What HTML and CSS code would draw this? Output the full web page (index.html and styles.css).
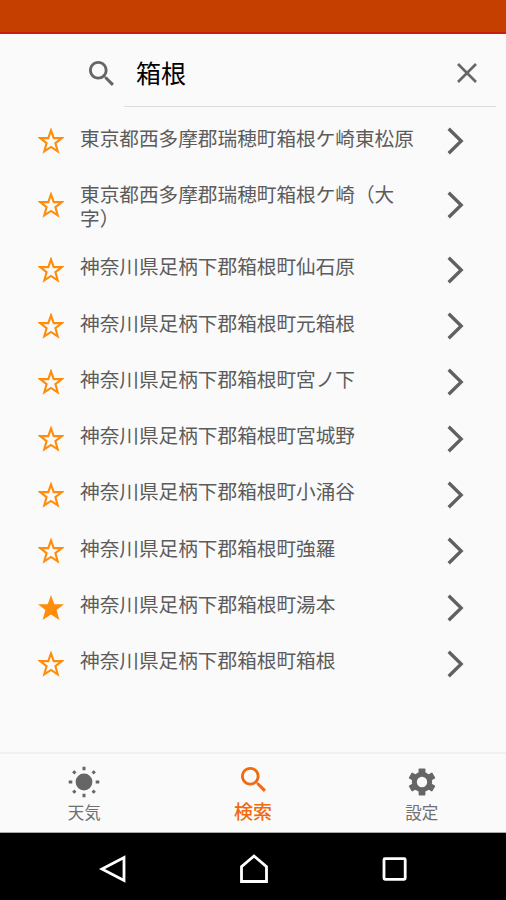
FILE: index.html
```html
<!DOCTYPE html>
<html lang="ja">
<head>
<meta charset="utf-8">
<title>箱根</title>
<link rel="stylesheet" href="styles.css">
</head>
<body>
<svg class="defs" aria-hidden="true">
  <symbol id="star" viewBox="0 0 26 26"><path d="M13 2.4l2.7 7.7h8.1l-6.4 5 2.3 8.2-6.7-4.4-6.7 4.4 2.3-8.2-6.4-5h8.1z" fill="none" stroke="currentColor" stroke-width="2.1"/></symbol>
  <symbol id="star-full" viewBox="0 0 26 26"><path d="M13 0l3.3 9.2H26l-7.4 5.8L21.4 25 13 19.6 4.6 25l2.8-10L0 9.2h9.7z"/></symbol>
  <symbol id="chevron" viewBox="0 0 20 28"><path d="M2.7 1.7L15.2 14 2.7 26.3" fill="none" stroke="currentColor" stroke-width="3.3"/></symbol>
  <symbol id="search" viewBox="3 3 17.5 17.5"><path d="M15.5 14h-.79l-.28-.27C15.41 12.59 16 11.11 16 9.5 16 5.91 13.09 3 9.5 3S3 5.91 3 9.5 5.91 16 9.5 16c1.61 0 3.09-.59 4.23-1.57l.27.28v.79l5 4.99L20.49 19l-4.99-5zm-6 0C7.01 14 5 11.99 5 9.5S7.01 5 9.5 5 14 7.01 14 9.5 11.99 14 9.5 14z"/></symbol>
</svg>
<div class="status"></div>
<header class="searchbar">
  <svg class="search-icon"><use href="#search"/></svg>
  <div class="field">
    <span class="query">箱根</span>
    <svg class="clear" viewBox="0 0 20 20"><path d="M1 1l18 18M19 1L1 19" fill="none" stroke="currentColor" stroke-width="2.6"/></svg>
  </div>
</header>
<ul class="results">
  <li class="row"><svg class="star"><use href="#star"/></svg><span class="place">東京都西多摩郡瑞穂町箱根ケ崎東松原</span><svg class="chevron"><use href="#chevron"/></svg></li>
  <li class="row tall"><svg class="star"><use href="#star"/></svg><span class="place">東京都西多摩郡瑞穂町箱根ケ崎（大<br>字）</span><svg class="chevron"><use href="#chevron"/></svg></li>
  <li class="row"><svg class="star"><use href="#star"/></svg><span class="place">神奈川県足柄下郡箱根町仙石原</span><svg class="chevron"><use href="#chevron"/></svg></li>
  <li class="row"><svg class="star"><use href="#star"/></svg><span class="place">神奈川県足柄下郡箱根町元箱根</span><svg class="chevron"><use href="#chevron"/></svg></li>
  <li class="row"><svg class="star"><use href="#star"/></svg><span class="place">神奈川県足柄下郡箱根町宮ノ下</span><svg class="chevron"><use href="#chevron"/></svg></li>
  <li class="row"><svg class="star"><use href="#star"/></svg><span class="place">神奈川県足柄下郡箱根町宮城野</span><svg class="chevron"><use href="#chevron"/></svg></li>
  <li class="row"><svg class="star"><use href="#star"/></svg><span class="place">神奈川県足柄下郡箱根町小涌谷</span><svg class="chevron"><use href="#chevron"/></svg></li>
  <li class="row"><svg class="star"><use href="#star"/></svg><span class="place">神奈川県足柄下郡箱根町強羅</span><svg class="chevron"><use href="#chevron"/></svg></li>
  <li class="row"><svg class="star"><use href="#star-full"/></svg><span class="place">神奈川県足柄下郡箱根町湯本</span><svg class="chevron"><use href="#chevron"/></svg></li>
  <li class="row"><svg class="star"><use href="#star"/></svg><span class="place">神奈川県足柄下郡箱根町箱根</span><svg class="chevron"><use href="#chevron"/></svg></li>
</ul>
<nav class="tabs">
  <div class="tab">
    <svg class="tab-icon" viewBox="-16 -16 32 32"><circle r="8.4"/><path d="M0-15.3v3.6M0 15.3v-3.6M-15.3 0h3.6M15.3 0h-3.6M-10.8-10.8l2.2 2.2M10.8 10.8l-2.2-2.2M10.8-10.8l-2.2 2.2M-10.8 10.8l2.2-2.2" stroke="currentColor" stroke-width="3"/></svg>
    <span class="tab-label">天気</span>
  </div>
  <div class="tab active">
    <svg class="tab-icon search-tab"><use href="#search"/></svg>
    <span class="tab-label">検索</span>
  </div>
  <div class="tab">
    <svg class="tab-icon" viewBox="-16 -16 32 32"><g id="teeth"><rect x="-3.4" y="-13.6" width="6.8" height="27.2" rx=".8"/><rect x="-3.4" y="-13.6" width="6.8" height="27.2" rx=".8" transform="rotate(60)"/><rect x="-3.4" y="-13.6" width="6.8" height="27.2" rx=".8" transform="rotate(120)"/></g><circle r="10.2"/><circle class="hub" r="5.2"/></svg>
    <span class="tab-label">設定</span>
  </div>
</nav>
<div class="system">
  <svg class="key" viewBox="0 0 32 32"><path d="M27 4.5v23L5 16z"/></svg>
  <svg class="key" viewBox="0 0 32 32"><path d="M3.5 28.5V13.7L16 3l12.5 10.7v14.8z"/></svg>
  <svg class="key" viewBox="0 0 32 32"><rect x="6" y="5.7" width="21.2" height="20.6" rx="1"/></svg>
</div>
</body>
</html>
```

FILE: styles.css
```css
* { box-sizing: border-box; }
body {
  margin: 0;
  width: 506px;
  height: 900px;
  display: flex;
  flex-direction: column;
  overflow: hidden;
  background: #fafafa;
  color: #666;
  font-family: "Noto Sans CJK JP", sans-serif;
}
svg { display: block; flex: none; fill: currentColor; }
.defs { display: none; }
.status {
  flex: none;
  height: 34px;
  background: #c54000;
  border-bottom: 2px solid #c81e10;
}
.searchbar {
  flex: none;
  display: flex;
  height: 73px;
  padding: 0 10px 0 89px;
}
.search-icon { width: 25px; height: 25px; margin-top: 27px; color: #666; }
.field {
  flex: 1;
  display: flex;
  justify-content: space-between;
  margin-left: 10px;
  padding: 0 19px 0 12px;
  border-bottom: 1px solid #ddd;
}
.query {
  margin-top: 20px;
  font-size: 25px;
  line-height: 36px;
  color: #000;
}
.clear { width: 20px; height: 20px; margin-top: 29px; }
.results {
  flex: 1;
  margin: 0;
  padding: 6px 40px 0 38px;
  list-style: none;
}
.row {
  display: flex;
  align-items: center;
  height: 56.3px;
}
.row.tall { height: 72.3px; }
.star { width: 26px; height: 26px; color: #ff8c0a; }
.place {
  flex: 1;
  margin-left: 16px;
  padding-bottom: 7px;
  font-size: 19.65px;
  line-height: 24px;
  white-space: nowrap;
  color: #5c5c5c;
}
.tall .place { padding: 1px 0 0; }
.chevron { width: 20px; height: 28px; color: #606060; }
.tabs {
  flex: none;
  display: flex;
  height: 81px;
  border-top: 2px solid #f0f0f0;
  border-bottom: 1px solid #aaa;
}
.tab {
  flex: 1;
  display: flex;
  flex-direction: column;
  align-items: center;
  padding-top: 12px;
}
.tab-icon { width: 32px; height: 32px; }
.tab-label { margin-top: 2px; font-size: 16.5px; line-height: 24px; color: #707070; }
.hub { fill: #fafafa; }
.active { padding-top: 13px; color: #f26a10; }
.search-tab { width: 25px; height: 25px; margin-bottom: 5px; }
.active .tab-label { font-size: 19px; font-weight: 500; color: #f26a10; }
.system {
  flex: none;
  display: flex;
  justify-content: space-between;
  align-items: center;
  height: 67px;
  padding: 4px 96px 0 97px;
  background: #000;
}
.key { width: 32px; height: 32px; fill: none; stroke: #fff; stroke-width: 2.8; }
```
